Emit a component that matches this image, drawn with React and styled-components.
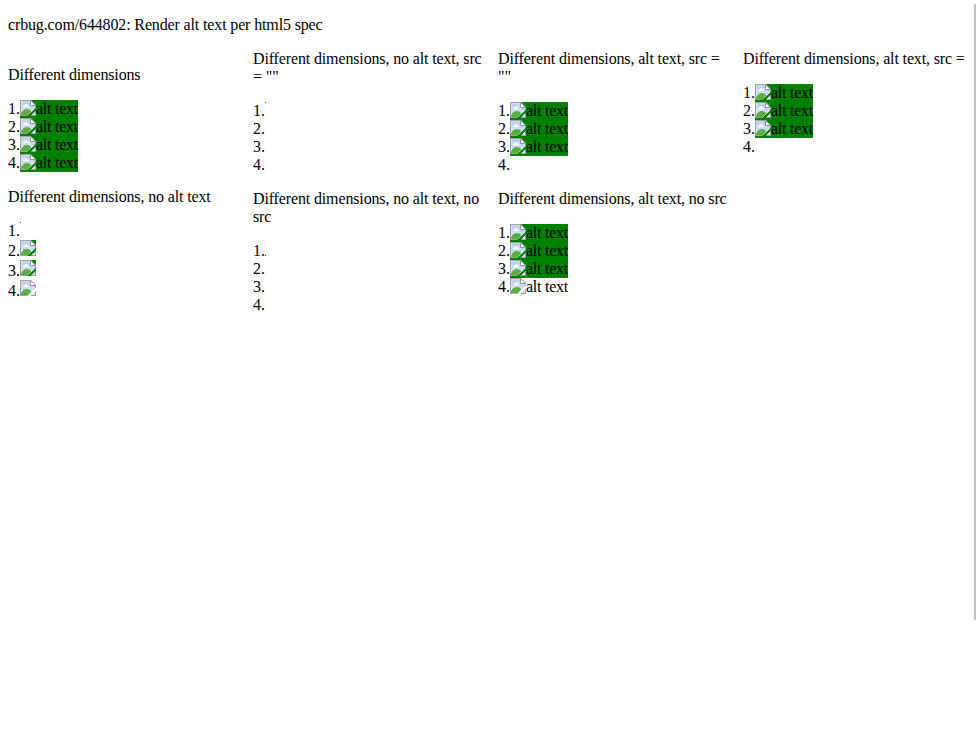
import React from "react";
import styled, { createGlobalStyle } from "styled-components";

const GlobalStyle = createGlobalStyle`
  body {
    margin: 0;
    background: #fff;
    color: #000;
    font: 16px/18px "Liberation Serif", "Times New Roman", serif;
    letter-spacing: -0.14px;
  }
`;

const Page = styled.main`
  display: flex;
  justify-content: space-between;
  width: 976px;
  height: 735px;
  overflow: hidden;
`;

const Content = styled.div`
  width: 964px;
  padding: 16px 0 0 8px;
  flex-shrink: 0;
`;

const Title = styled.p`
  margin: 0 0 16px;
`;

const Columns = styled.div`
  display: grid;
  grid-template-columns: repeat(4, 229px);
  column-gap: 16px;
  align-items: start;
`;

const Column = styled.div`
  padding-top: ${(p) => p.$top || 0}px;
`;

const Group = styled.section`
  margin-bottom: 16px;
`;

const Heading = styled.p`
  margin: 0 0 16px;
`;

const Row = styled.div`
  display: flex;
  align-items: flex-start;
  height: ${(p) => (p.$tall ? 20 : 18)}px;
`;

const Marker = styled.span`
  width: 12px;
  letter-spacing: 0;
  padding-top: ${(p) => (p.$tall ? 2 : 0)}px;
`;

const Alt = styled.span`
  display: flex;
  width: ${(p) => (p.$bare ? 16 : 58)}px;
  height: ${(p) => (p.$bare ? 16 : 18)}px;
  background: ${(p) => (p.$plain ? "transparent" : "#008000")};
  white-space: nowrap;
`;

const AltText = styled.span`
  letter-spacing: -0.26px;
`;

const Dot = styled.span`
  width: 1px;
  height: 1px;
  margin-top: ${(p) => (p.$low ? 13 : 0)}px;
  background: #008000;
`;

const Divider = styled.div`
  width: 2px;
  height: 616px;
  margin-top: 4px;
  background: #c0c0c0;
`;

const Icon = styled.svg`
  width: 16px;
  height: 16px;
  flex: none;
`;

function BrokenImage() {
  return (
    <Icon viewBox="0 0 16 16" aria-hidden="true">
      <defs>
        <linearGradient id="sky" x1="0" y1="0" x2="0" y2="1">
          <stop offset="0" stopColor="#b9cff5" />
          <stop offset="1" stopColor="#dce7fb" />
        </linearGradient>
      </defs>
      <path d="M0 0H11L16 5V7.5L7 16H0Z" fill="#a0a0a0" />
      <path d="M1 1H10.5L15 5.5V8.5L8 15H1Z" fill="#dce7fb" />
      <path d="M1.5 1.5H10V6H15V8.5L8.5 14.5H1.5Z" fill="url(#sky)" />
      <path d="M3 7.2C3 5.9 3.8 5.4 4.6 5.5C5 3.8 7.4 3.9 7.7 5.7C8.5 5.6 9 6.3 9 7.2Z" fill="#fff" />
      <path d="M1 13.5C2.5 10.5 4.8 9 7.2 9.1C9.2 9.2 10.4 10 11.2 11.8L7.8 15H1Z" fill="#58ae3e" />
      <path d="M10.5 1V5.5H15" fill="none" stroke="#929292" />
      <path d="M11 1.8V5H14.2Z" fill="#fff" />
      <path d="M16 10.5V16H10.5Z" fill="#a0a0a0" />
      <path d="M15 11.7V15H11.7Z" fill="#dce7fb" />
    </Icon>
  );
}

function Item({ number, kind }) {
  const tall = kind === "icon" || kind === "plainIcon";
  const plain = kind === "plainAlt" || kind === "plainIcon";
  return (
    <Row $tall={tall}>
      <Marker $tall={tall}>{number}.</Marker>
      {(kind === "dot" || kind === "lowDot") && <Dot $low={kind === "lowDot"} />}
      {kind !== "empty" && kind !== "dot" && kind !== "lowDot" && (
        <Alt $bare={tall} $plain={plain}>
          <BrokenImage />
          {!tall && <AltText>alt text</AltText>}
        </Alt>
      )}
    </Row>
  );
}

const columns = [
  {
    top: 16,
    groups: [
      { title: "Different dimensions", items: ["alt", "alt", "alt", "alt"] },
      { title: "Different dimensions, no alt text", items: ["dot", "icon", "icon", "plainIcon"] },
    ],
  },
  {
    groups: [
      { title: 'Different dimensions, no alt text, src = ""', items: ["dot", "empty", "empty", "empty"] },
      { title: "Different dimensions, no alt text, no src", items: ["lowDot", "empty", "empty", "empty"] },
    ],
  },
  {
    groups: [
      { title: 'Different dimensions, alt text, src = ""', items: ["alt", "alt", "alt", "empty"] },
      { title: "Different dimensions, alt text, no src", items: ["alt", "alt", "alt", "plainAlt"] },
    ],
  },
  {
    groups: [{ title: "Different dimensions, alt text, src =", items: ["alt", "alt", "alt", "empty"] }],
  },
];

export default function App() {
  return (
    <>
      <GlobalStyle />
      <Page>
        <Content>
          <Title>crbug.com/644802: Render alt text per html5 spec</Title>
          <Columns>
            {columns.map((column, c) => (
              <Column key={c} $top={column.top}>
                {column.groups.map((group) => (
                  <Group key={group.title}>
                    <Heading>{group.title}</Heading>
                    {group.items.map((kind, i) => (
                      <Item key={i} number={i + 1} kind={kind} />
                    ))}
                  </Group>
                ))}
              </Column>
            ))}
          </Columns>
        </Content>
        <Divider />
      </Page>
    </>
  );
}
